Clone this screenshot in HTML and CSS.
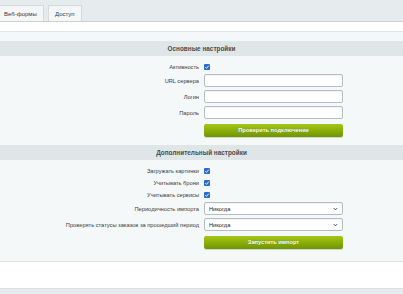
FILE: index.html
```html
<!DOCTYPE html>
<html lang="ru">
<head>
    <meta charset="UTF-8">
    <meta name="viewport" content="width=device-width, initial-scale=1.0">
    <title>Настройки импорта</title>
    <link rel="stylesheet" href="styles.css">
</head>
<body>

    <!-- Вкладки -->
    <div class="tabs">
        <div class="tab tab-first">Веб-формы</div>
        <div class="tab">Доступ</div>
    </div>
    <div class="strip"></div>

    <div class="panel">
        <div class="section-title">Основные настройки</div>
        <div class="rows">
            <div class="label">Активность</div>
            <div class="ctl"><span class="check"><svg viewBox="0 0 6 6"><path d="M1.3 3.2 L2.5 4.4 L4.8 1.6" fill="none" stroke="#fff" stroke-width="0.9"/></svg></span></div>

            <div class="label">URL сервера</div>
            <div class="ctl"><div class="input"></div></div>

            <div class="label">Логин</div>
            <div class="ctl"><div class="input"></div></div>

            <div class="label">Пароль</div>
            <div class="ctl"><div class="input"></div></div>

            <div class="label"></div>
            <div class="ctl ctl-btn"><div class="btn">Проверить подключение</div></div>
        </div>

        <div class="section-title">Дополнительный настройки</div>
        <div class="rows rows-extra">
            <div class="label">Загружать картинки</div>
            <div class="ctl"><span class="check"><svg viewBox="0 0 6 6"><path d="M1.3 3.2 L2.5 4.4 L4.8 1.6" fill="none" stroke="#fff" stroke-width="0.9"/></svg></span></div>

            <div class="label">Учитывать брони</div>
            <div class="ctl"><span class="check"><svg viewBox="0 0 6 6"><path d="M1.3 3.2 L2.5 4.4 L4.8 1.6" fill="none" stroke="#fff" stroke-width="0.9"/></svg></span></div>

            <div class="label">Учитывать сервисы</div>
            <div class="ctl"><span class="check"><svg viewBox="0 0 6 6"><path d="M1.3 3.2 L2.5 4.4 L4.8 1.6" fill="none" stroke="#fff" stroke-width="0.9"/></svg></span></div>

            <div class="label">Периодичность импорта</div>
            <div class="ctl"><div class="input select">Никогда<svg class="arrow" viewBox="0 0 6 4"><path d="M1 1 L3 3 L5 1" fill="none" stroke="#333" stroke-width="1.1"/></svg></div></div>

            <div class="label">Проверять статусы заказов за прошедший период</div>
            <div class="ctl"><div class="input select">Никогда<svg class="arrow" viewBox="0 0 6 4"><path d="M1 1 L3 3 L5 1" fill="none" stroke="#333" stroke-width="1.1"/></svg></div></div>

            <div class="label"></div>
            <div class="ctl ctl-btn"><div class="btn">Запустить импорт</div></div>
        </div>
    </div>

    <div class="footer-space"></div>
    <div class="bottom-bar"></div>

</body>
</html>
```

FILE: styles.css
```css
body {
    margin: 0;
    background: #fff;
    font-family: "Liberation Sans", Arial, sans-serif;
    font-size: 5.7px;
    color: #333;
}
.tabs {
    display: flex;
    align-items: flex-end;
    gap: 4px;
    height: 22px;
    background: #e6ecee;
    border-bottom: 1px solid #c9d1d4;
    box-sizing: border-box;
}
.tab {
    height: 16px;
    line-height: 16px;
    padding: 0 6px;
    background: #f4f6f7;
    border: 1px solid #d3dadd;
    border-bottom: none;
    box-sizing: border-box;
    color: #3c3c3c;
    font-size: 6px;
    white-space: nowrap;
}
.tab-first { margin-left: -1px; padding-left: 4px; width: 45px; }
.tab + .tab { width: 34px; }
.strip {
    height: 10px;
    border-bottom: 1px solid #dfe5e8;
    box-sizing: border-box;
}
.panel {
    background: #f5f8f9;
    padding-top: 9px;
    border-bottom: 1px solid #dde4e6;
}
.section-title {
    height: 15px;
    line-height: 15px;
    background: #dfe6e7;
    text-align: center;
    font-weight: bold;
    font-size: 6.4px;
    color: #4b4b4b;
}
.rows {
    display: grid;
    grid-template-columns: 1fr 1fr;
    column-gap: 5px;
    row-gap: 3px;
    align-items: center;
    padding: 6px 0 8px;
}
.rows-extra { padding: 6px 0 12px; }
.label {
    text-align: right;
    color: #3a3a3a;
}
.ctl { display: flex; align-items: center; }
.ctl-btn { margin-top: 2px; }
.check {
    display: block;
    width: 6px;
    height: 6px;
    margin: 2px 0 1px;
    background: #2b6ccb;
    border-radius: 1px;
}
.check svg { display: block; width: 6px; height: 6px; }
.input {
    width: 139px;
    height: 13px;
    background: #fff;
    border: 1px solid #b5bec3;
    border-radius: 2px;
    box-shadow: inset 0 1px 1px rgba(0,0,0,0.06);
    box-sizing: border-box;
}
.select {
    display: flex;
    align-items: center;
    justify-content: space-between;
    padding: 0 4px;
    color: #222;
}
.arrow { width: 5px; height: 4px; }
.btn {
    width: 139px;
    height: 13px;
    line-height: 13px;
    text-align: center;
    color: #fff;
    font-weight: bold;
    border-radius: 2px;
    background: linear-gradient(#a6c716, #6e9500);
    box-shadow: 0 1px 1px rgba(0,0,0,0.15);
    text-shadow: 0 0 1px rgba(0,0,0,0.3);
}
.footer-space { height: 26px; }
.bottom-bar { height: 10px; background: #e5ebee; border-top: 1px solid #d9e0e3; }
```
